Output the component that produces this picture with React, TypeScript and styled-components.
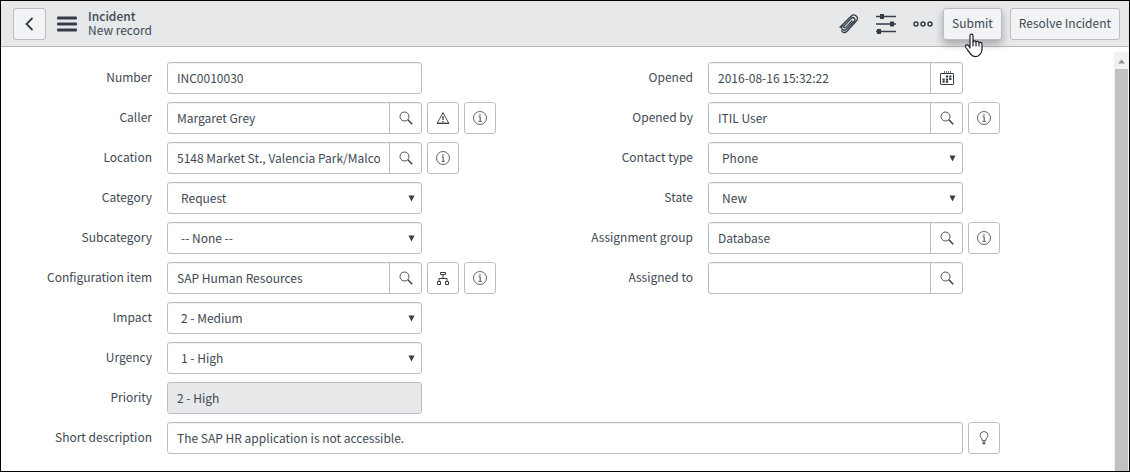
import React, { useId } from "react";
import styled, { createGlobalStyle, css } from "styled-components";

const ink = "#343d47";
const text = "#3e4853";
const line = "#b9bdc5";

const GlobalStyle = createGlobalStyle`
  * { box-sizing: border-box; }
  body {
    margin: 0;
    background: #fff;
    color: ${text};
    font: 12px/20px "Noto Sans CJK SC", "Open Sans", sans-serif;
  }
  button, input, select { font: inherit; color: inherit; margin: 0; }
  svg { display: block; }
`;

const Frame = styled.div`
  display: flex;
  flex-direction: column;
  min-height: 100vh;
  border: 1px solid #000;
`;

const Header = styled.header`
  display: flex;
  align-items: center;
  justify-content: space-between;
  padding: 7px 9px 6px 12px;
  background: #e6e8ea;
  border-bottom: 1px solid #b8babd;
`;

const HeaderGroup = styled.div<{ $gap: number }>`
  display: flex;
  align-items: center;
  gap: ${(p) => p.$gap}px;
`;

const HeaderTools = styled.div`
  display: flex;
  align-items: center;
  gap: 17px;
  padding-right: 2px;
`;

const Heading = styled.div`
  display: flex;
  flex-direction: column;
  padding-bottom: 2px;
`;

const Title = styled.h1`
  margin: 0;
  font-size: 12px;
  line-height: 14px;
  font-weight: 500;
`;

const Subtitle = styled.div`
  line-height: 14px;
`;

const GhostButton = styled.button`
  padding: 0;
  border: 0;
  background: none;
  cursor: pointer;
`;

const Button = styled.button<{ $raised?: boolean }>`
  position: relative;
  height: 32px;
  padding: 0 8px 2px;
  border: 1px solid ${line};
  border-radius: 3px;
  background: #f1f3f5;
  white-space: nowrap;
  cursor: pointer;
  ${(p) => p.$raised && css`box-shadow: 0 4px 8px rgba(0, 0, 0, 0.3);`}
`;

const BackButton = styled(Button)`
  padding: 0 9px;
`;

const Pointer = styled.svg`
  position: absolute;
  left: 20px;
  top: 24px;
  z-index: 1;
`;

const Body = styled.div`
  display: flex;
  flex: 1;
`;

const Form = styled.form`
  flex: 1;
  min-width: 0;
  display: grid;
  grid-template-columns: 1fr 1fr;
  align-content: start;
  row-gap: 8px;
  padding: 15px 31px 16px 0;
`;

const Column = styled.div<{ $wide?: boolean }>`
  display: flex;
  flex-direction: column;
  gap: 8px;
  min-width: 0;
  ${(p) => p.$wide && css`grid-column: 1 / -1;`}
`;

const Row = styled.div`
  display: grid;
  grid-template-columns: 151px minmax(0, 1fr) 115px;
  align-items: center;
`;

const Label = styled.label`
  padding-bottom: 2px;
  text-align: right;
  white-space: nowrap;
`;

const Control = styled.div`
  position: relative;
  display: flex;
  height: 32px;
  margin-left: 15px;
  margin-right: 5px;
  border: 1px solid ${line};
  border-radius: 3px;
  background: #fff;
  box-shadow: inset 0 1px 1px rgba(0, 0, 0, 0.06);
`;

const Input = styled.input`
  flex: 1;
  min-width: 0;
  padding: 0 9px;
  border: 0;
  border-radius: 2px;
  background: transparent;
  &:read-only { background: #e6e8ea; }
`;

const Select = styled.select`
  flex: 1;
  min-width: 0;
  padding: 0 24px 0 13px;
  border: 0;
  background: transparent;
  appearance: none;
`;

const Arrow = styled.svg`
  position: absolute;
  right: 6px;
  top: 12px;
  pointer-events: none;
`;

const Addon = styled.button`
  display: flex;
  align-items: center;
  justify-content: center;
  width: 32px;
  padding: 0;
  border: 0;
  border-left: 1px solid ${line};
  background: transparent;
  cursor: pointer;
`;

const Actions = styled.div`
  display: flex;
  gap: 5px;
`;

const IconButton = styled.button`
  display: flex;
  align-items: center;
  justify-content: center;
  width: 32px;
  height: 32px;
  padding: 0;
  border: 1px solid ${line};
  border-radius: 3px;
  background: #fff;
  cursor: pointer;
`;

const ScrollTrack = styled.div`
  display: flex;
  flex-direction: column;
  align-items: center;
  width: 15px;
  margin-top: 5px;
  background: #f1f1f1;
`;

const ScrollArrow = styled.svg`
  margin: 7px 0 5px;
`;

const ScrollThumb = styled.div`
  flex: 1;
  width: 13px;
  background: #c1c1c1;
`;

const icons = {
  search: (
    <svg width="14" height="14" viewBox="0 0 14 14" fill="none" stroke={ink}>
      <circle cx="5.5" cy="5.5" r="4.5" strokeWidth="0.9" />
      <path d="M8.8 8.8l4.4 4.4" strokeWidth="1.4" />
    </svg>
  ),
  info: (
    <svg width="14" height="14" viewBox="0 0 14 14" fill="none" stroke={ink}>
      <circle cx="7" cy="7" r="6.5" strokeWidth="0.8" />
      <path d="M5.800 5.800h1.400v4.400M5.600 10.400h3" strokeWidth="0.900" />
      <path d="M6.400 3.900h1.200" strokeWidth="1.300" />
    </svg>
  ),
  warning: (
    <svg width="14" height="14" viewBox="0 0 14 14" fill="none" stroke={ink}>
      <path d="M7 1.600L1.200 12.300h11.600z" strokeWidth="0.900" />
      <path d="M1 12.400h12" strokeWidth="1.200" />
      <path d="M7 5v4M7 10v1.300" strokeWidth="1.300" />
    </svg>
  ),
  tree: (
    <svg width="14" height="14" viewBox="0 0 14 14" fill="none" stroke={ink}>
      <path d="M4.500 1.500h5v2h-5zM1.500 10.500h3v3h-3zM9.500 10.500h3v3h-3zM7 3.500v4M3 10.500v-3h8v3" />
    </svg>
  ),
  calendar: (
    <svg width="14" height="14" viewBox="0 0 14 14" fill="none" stroke={ink}>
      <rect x="0.5" y="2.5" width="13" height="11" rx="0.5" />
      <path d="M4.500 0v2M6.500 0v2M8.500 0v2M10.500 0v2" strokeWidth="0.700" />
      <path d="M2.500 10.700h2.200M2.500 8.600h2.200M5.900 10.700h2.200M5.900 8.600h2.200M5.900 5.500h2.200M9.200 5.500h2.200M9.200 8h2.200" strokeWidth="2" />
    </svg>
  ),
  bulb: (
    <svg width="14" height="14" viewBox="0 0 14 14" fill="none" stroke={ink}>
      <path d="M5.300 9.500C5.300 7.300 3 6.700 3 4.500a4 4 0 0 1 8 0c0 2.200-2.300 2.800-2.300 5z" strokeWidth="0.800" />
      <path d="M5.300 11h3.400M5.600 12.600h2.600" strokeWidth="1.100" />
    </svg>
  ),
};

type IconName = keyof typeof icons;

const names: Record<IconName, string> = {
  search: "Look up",
  info: "Preview record",
  warning: "Related incidents",
  tree: "Show dependencies",
  calendar: "Choose date",
  bulb: "Suggestions",
};

type FieldProps = {
  label: string;
  value: string;
  kind?: "text" | "select" | "readonly";
  addon?: IconName;
  actions?: IconName[];
};

function Field({ label, value, kind = "text", addon, actions = [] }: FieldProps) {
  const id = useId();
  return (
    <Row>
      <Label htmlFor={id}>{label}</Label>
      <Control>
        {kind === "select" ? (
          <>
            <Select id={id} defaultValue={value}>
              <option>{value}</option>
            </Select>
            <Arrow width="7" height="7" viewBox="0 0 7 7">
              <path d="M0.500 0.500h6L3.500 6.500z" fill={ink} />
            </Arrow>
          </>
        ) : (
          <Input id={id} defaultValue={value} readOnly={kind === "readonly"} />
        )}
        {addon && (
          <Addon type="button" aria-label={names[addon]}>
            {icons[addon]}
          </Addon>
        )}
      </Control>
      <Actions>
        {actions.map((name) => (
          <IconButton key={name} type="button" aria-label={names[name]}>
            {icons[name]}
          </IconButton>
        ))}
      </Actions>
    </Row>
  );
}

const leftFields: FieldProps[] = [
  { label: "Number", value: "INC0010030" },
  { label: "Caller", value: "Margaret Grey", addon: "search", actions: ["warning", "info"] },
  { label: "Location", value: "5148 Market St., Valencia Park/Malcolm", addon: "search", actions: ["info"] },
  { label: "Category", value: "Request", kind: "select" },
  { label: "Subcategory", value: "-- None --", kind: "select" },
  { label: "Configuration item", value: "SAP Human Resources", addon: "search", actions: ["tree", "info"] },
  { label: "Impact", value: "2 - Medium", kind: "select" },
  { label: "Urgency", value: "1 - High", kind: "select" },
  { label: "Priority", value: "2 - High", kind: "readonly" },
];

const rightFields: FieldProps[] = [
  { label: "Opened", value: "2016-08-16 15:32:22", addon: "calendar" },
  { label: "Opened by", value: "ITIL User", addon: "search", actions: ["info"] },
  { label: "Contact type", value: "Phone", kind: "select" },
  { label: "State", value: "New", kind: "select" },
  { label: "Assignment group", value: "Database", addon: "search", actions: ["info"] },
  { label: "Assigned to", value: "", addon: "search" },
];

export default function App() {
  return (
    <Frame>
      <GlobalStyle />
      <Header>
        <HeaderGroup $gap={11}>
          <BackButton type="button" aria-label="Back">
            <svg width="13" height="14" viewBox="0 0 13 14" fill="none" stroke={ink} strokeWidth="1.8">
              <path d="M9.500 1L3.500 7l6 6" />
            </svg>
          </BackButton>
          <GhostButton type="button" aria-label="Menu">
            <svg width="20" height="16" viewBox="0 0 20 16" fill={ink}>
              <rect y="0.5" width="20" height="3" rx="1" />
              <rect y="6.5" width="20" height="3" rx="1" />
              <rect y="12.5" width="20" height="3" rx="1" />
            </svg>
          </GhostButton>
          <Heading>
            <Title>Incident</Title>
            <Subtitle>New record</Subtitle>
          </Heading>
        </HeaderGroup>
        <HeaderGroup $gap={8}>
          <HeaderTools>
            <GhostButton type="button" aria-label="Attachments">
              <svg width="20" height="20" viewBox="0 0 20 20" fill="none" stroke={ink} strokeWidth="1.3" strokeLinecap="round" strokeLinejoin="round">
                <path d="M13 7L6.800 13.400c-1.200 1.200-2.900-.3-1.700-1.600L12.400 4.300c2-1.900 4.700.6 2.900 2.700L7.400 15.200c-2.700 2.600-6.400-.7-3.900-3.500M1 13.300L12.300 2c3.200-3 8.200 1.400 5.200 4.800L8 17.200c-2 2-4.500 1.600-5.300-.4" />
              </svg>
            </GhostButton>
            <GhostButton type="button" aria-label="Personalize form">
              <svg width="20" height="20" viewBox="0 0 20 20" stroke={ink} strokeWidth="1.500">
                <path d="M0 2.500h20M0 10h20M0 17.500h20" />
                <path d="M6 0v5M16 7.500v5M3 15v5" strokeWidth="4" />
              </svg>
            </GhostButton>
            <GhostButton type="button" aria-label="More options">
              <svg width="20" height="8" viewBox="0 0 20 8" fill="none" stroke={ink} strokeWidth="1.500">
                <circle cx="3" cy="4" r="2" />
                <circle cx="10" cy="4" r="2" />
                <circle cx="17" cy="4" r="2" />
              </svg>
            </GhostButton>
          </HeaderTools>
          <Button type="button" $raised>
            Submit
            <Pointer width="20" height="26" viewBox="0 0 20 26" fill="#fff" stroke="#1b1e2b" strokeWidth="1.200" strokeLinejoin="round" strokeLinecap="round">
              <path d="M6 15V3c0-2.400 3-2.400 3 0v6c.3-1.600 2.800-1.400 3 .3.400-1.400 2.700-1.200 3 .7.600-1.200 3-.8 3 1.200v4.800c0 3-1.500 5.500-4 7-2.500 1-5 .5-7-1.500-2-2.200-3.200-4.500-5.200-7-1.300-2.200 1.200-3.500 2.700-2z" />
              <path d="M9 9v4M12 9.500V13M15 10.500V13" />
            </Pointer>
          </Button>
          <Button type="button">Resolve Incident</Button>
        </HeaderGroup>
      </Header>
      <Body>
        <Form onSubmit={(e) => e.preventDefault()}>
          <Column>
            {leftFields.map((f) => (
              <Field key={f.label} {...f} />
            ))}
          </Column>
          <Column>
            {rightFields.map((f) => (
              <Field key={f.label} {...f} />
            ))}
          </Column>
          <Column $wide>
            <Field label="Short description" value="The SAP HR application is not accessible." actions={["bulb"]} />
          </Column>
        </Form>
        <ScrollTrack aria-hidden="true">
          <ScrollArrow width="7" height="5" viewBox="0 0 7 5">
            <path d="M0 4.500h7L3.500 0.500z" fill="#8f8f8f" />
          </ScrollArrow>
          <ScrollThumb />
        </ScrollTrack>
      </Body>
    </Frame>
  );
}
